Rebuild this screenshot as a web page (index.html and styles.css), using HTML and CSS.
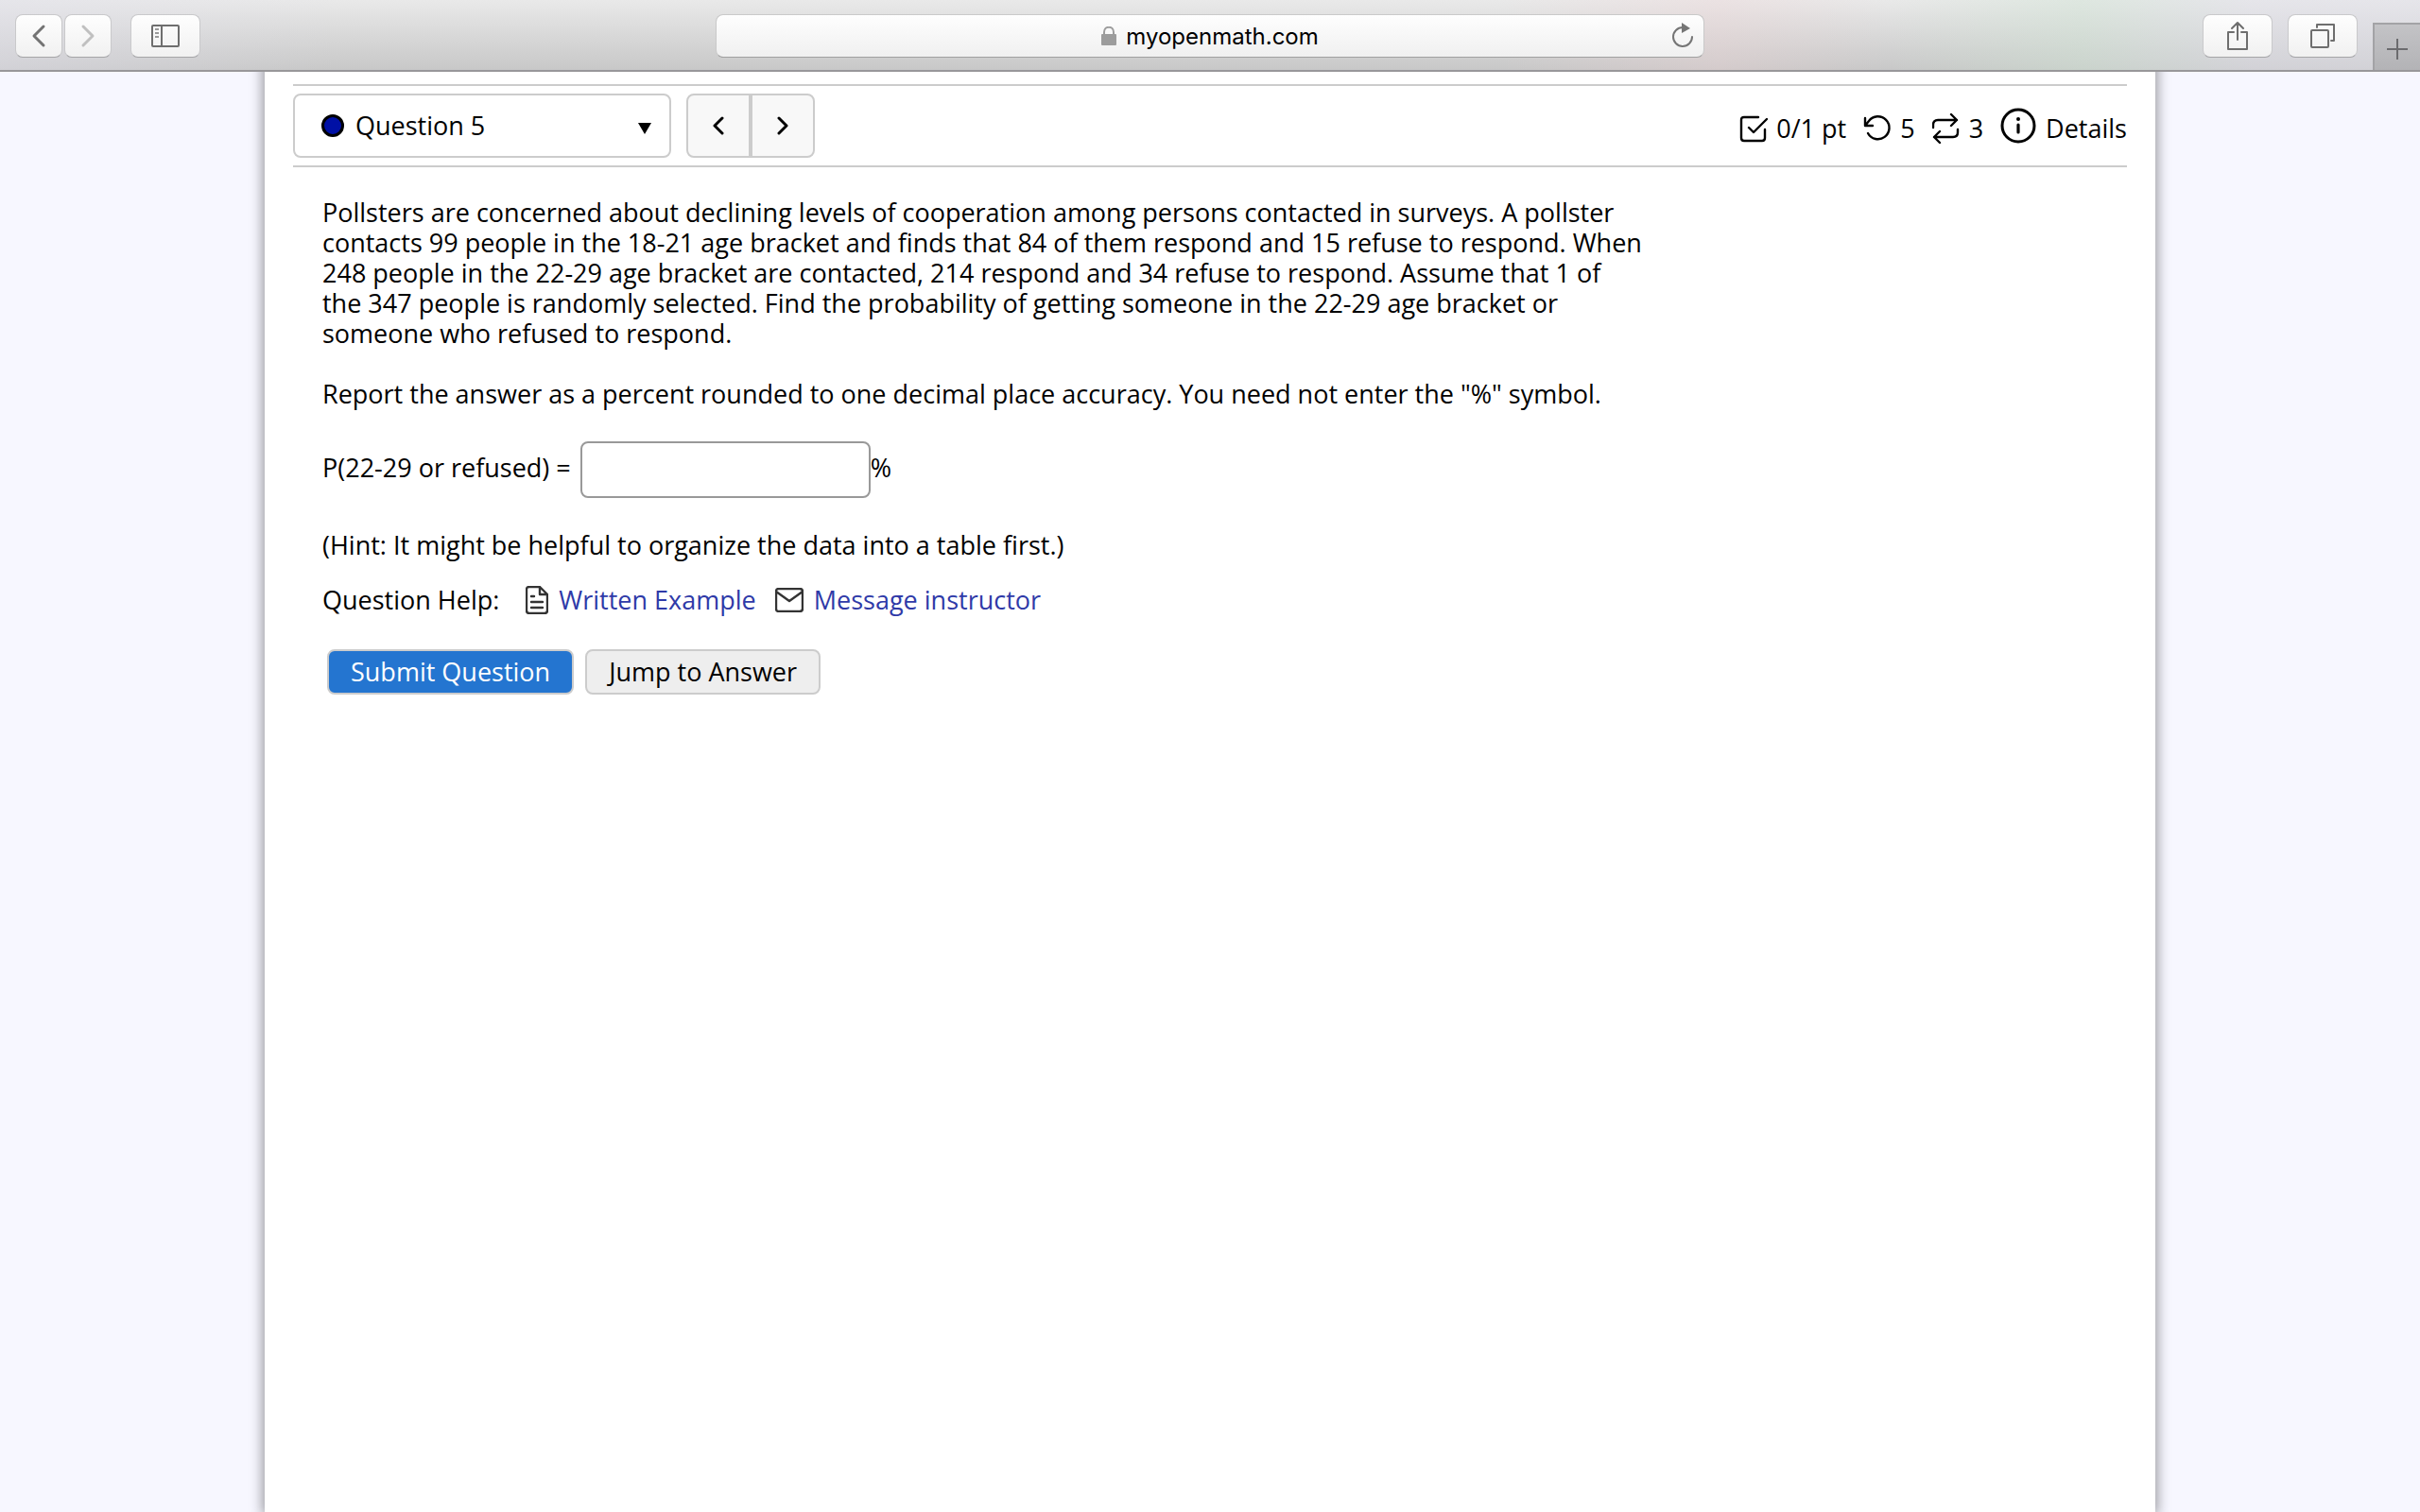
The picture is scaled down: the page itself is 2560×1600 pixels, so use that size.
FILE: index.html
```html
<!DOCTYPE html>
<html lang="en">
<head>
  <meta charset="UTF-8">
  <meta name="viewport" content="width=device-width, initial-scale=1.0">
  <title>MyOpenMath</title>
  <link rel="stylesheet" href="styles.css">
</head>
<body>
  <header class="toolbar">
    <div class="left-group">
      <div class="nav-group">
        <button class="tool-btn small" aria-label="Back">
          <svg width="50" height="44" viewBox="0 0 50 44"><path d="M30 12 L20 22 L30 32" stroke="#737373" stroke-width="3"/></svg>
        </button>
        <button class="tool-btn small" aria-label="Forward">
          <svg width="50" height="44" viewBox="0 0 50 44"><path d="M20 12 L30 22 L20 32" stroke="#c0c0c0" stroke-width="3"/></svg>
        </button>
      </div>
      <button class="tool-btn" aria-label="Show sidebar">
        <svg width="30" height="24" viewBox="0 0 30 24">
          <rect x="1" y="1" width="28" height="22" rx="1" stroke="#6e6e6e" stroke-width="2"/>
          <path d="M11 1 V23" stroke="#6e6e6e" stroke-width="2"/>
          <path d="M4 5 H8 M4 9 H8 M4 13 H8" stroke="#9a9a9a" stroke-width="2" stroke-linecap="butt"/>
        </svg>
      </button>
    </div>
    <div class="address">
      <svg width="16" height="20" viewBox="0 0 16 20">
        <rect x="0" y="8" width="16" height="12" rx="1" fill="#9c9c9c"/>
        <path d="M3 9 V6 C3 -1 13 -1 13 6 V9" stroke="#9c9c9c" stroke-width="2"/>
      </svg>
      <input class="url" type="text" value="myopenmath.com" aria-label="Address">
      <button class="reload" aria-label="Reload">
        <svg width="24" height="28" viewBox="0 0 24 28">
          <path d="M12 5 A10 10 0 1 0 22 15" stroke="#757575" stroke-width="2"/>
          <path d="M11 0 L20 6 L11 11 Z" fill="#757575"/>
        </svg>
      </button>
    </div>
    <div class="right-group">
      <button class="tool-btn" aria-label="Share">
        <svg width="24" height="32" viewBox="0 0 24 32">
          <path d="M8 12 H2 V30 H22 V12 H16 M12 20 V2 M6 8 L12 2 L18 8" stroke="#6e6e6e" stroke-width="2"/>
        </svg>
      </button>
      <button class="tool-btn" aria-label="Show all tabs">
        <svg width="26" height="26" viewBox="0 0 26 26">
          <rect x="1" y="7" width="18" height="18" rx="1" stroke="#6e6e6e" stroke-width="2"/>
          <path d="M7 4 V1 H25 V18 H22" stroke="#6e6e6e" stroke-width="2"/>
        </svg>
      </button>
      <button class="new-tab" aria-label="New tab">
        <svg width="22" height="22" viewBox="0 0 22 22"><path d="M11 0 V22 M0 11 H22" stroke="#6b6b6e" stroke-width="2"/></svg>
      </button>
    </div>
  </header>

  <main class="page">
    <div class="question-bar">
      <div class="picker">
        <span class="status-dot"></span>
        <select class="question-select" aria-label="Question">
          <option>Question 5</option>
        </select>
        <svg class="caret" width="14" height="12" viewBox="0 0 14 12"><path d="M0 0 H14 L7 12 Z" fill="#000"/></svg>
      </div>
      <div class="pager">
        <button aria-label="Previous question">
          <svg width="12" height="20" viewBox="0 0 12 20"><path d="M10 2 L2 10 L10 18" stroke="#000" stroke-width="3"/></svg>
        </button>
        <button aria-label="Next question">
          <svg width="12" height="20" viewBox="0 0 12 20"><path d="M2 2 L10 10 L2 18" stroke="#000" stroke-width="3"/></svg>
        </button>
      </div>
      <div class="info">
        <span class="stat">
          <svg width="30" height="30" viewBox="0 0 30 30"><path d="M20 3 H5 Q2 3 2 6 V25 Q2 28 5 28 H24 Q27 28 27 25 V16 M10 14 L15 19 L29 5" stroke="#000" stroke-width="2.4"/></svg>
          0/1 pt
        </span>
        <span class="stat">
          <svg width="30" height="30" viewBox="0 0 30 30"><path d="M2 4 V12 H10 M2 12 L6 7 A12 12 0 1 1 5 20" stroke="#000" stroke-width="2.4"/></svg>
          5
        </span>
        <span class="stat">
          <svg width="30" height="32" viewBox="0 0 30 32"><path d="M1 15 V12 Q1 7 6 7 H26 M20 1 L26 7 L20 13 M27 17 V20 Q27 25 22 25 H2 M8 19 L2 25 L8 31" stroke="#000" stroke-width="2.4"/></svg>
          3
        </span>
        <button class="details">
          <svg width="38" height="38" viewBox="0 0 38 38">
            <circle cx="19" cy="19" r="17" stroke="#000" stroke-width="3"/>
            <path d="M19 18 V26" stroke="#000" stroke-width="3.2"/>
            <circle cx="19" cy="12" r="2" fill="#000"/>
          </svg>
          <span>Details</span>
        </button>
      </div>
    </div>

    <div class="question">
      <p>Pollsters are concerned about declining levels of cooperation among persons contacted in surveys. A pollster<br>
      contacts 99 people in the 18-21 age bracket and finds that 84 of them respond and 15 refuse to respond. When<br>
      248 people in the 22-29 age bracket are contacted, 214 respond and 34 refuse to respond. Assume that 1 of<br>
      the 347 people is randomly selected. Find the probability of getting someone in the 22-29 age bracket or<br>
      someone who refused to respond.</p>
      <p>Report the answer as a percent rounded to one decimal place accuracy. You need not enter the "%" symbol.</p>
      <div class="answer">
        <label for="qn0">P(22-29 or refused) =</label>
        <input type="text" id="qn0" autocomplete="off">
        <span>%</span>
      </div>
      <p>(Hint: It might be helpful to organize the data into a table first.)</p>
      <div class="help">
        <span>Question Help:</span>
        <a href="#">
          <svg width="24" height="30" viewBox="0 0 24 30"><path d="M15 1 H4 Q1 1 1 4 V26 Q1 29 4 29 H20 Q23 29 23 26 V9 Z M15 1 V9 H23 M6 11 H9 M6 17 H18 M6 23 H18" stroke="#333" stroke-width="2.4"/></svg>
          Written Example
        </a>
        <a href="#">
          <svg width="30" height="26" viewBox="0 0 30 26"><path d="M4 1 H26 Q29 1 29 4 V22 Q29 25 26 25 H4 Q1 25 1 22 V4 Q1 1 4 1 Z M1 4 L15 14 L29 4" stroke="#333" stroke-width="2.4"/></svg>
          Message instructor
        </a>
      </div>
      <div class="actions">
        <button class="btn primary">Submit Question</button>
        <button class="btn">Jump to Answer</button>
      </div>
    </div>
  </main>
</body>
</html>
```
FILE: styles.css
```css
* {
  box-sizing: border-box;
}
body {
  margin: 0;
  min-height: 100vh;
  display: flex;
  flex-direction: column;
  background: #f7f7ff;
  color: #000;
  font-family: "Open Sans", sans-serif;
  font-size: 27px;
  line-height: 32px;
}
svg {
  display: block;
  flex: none;
  fill: none;
  stroke-linecap: round;
  stroke-linejoin: round;
}
button, input, select {
  font: inherit;
  color: inherit;
}
button {
  display: flex;
  align-items: center;
  justify-content: center;
  padding: 0;
  cursor: pointer;
}

/* browser toolbar */
.toolbar {
  position: relative;
  z-index: 1;
  display: grid;
  grid-template-columns: 1fr 1046px 1fr;
  align-items: center;
  height: 76px;
  border-bottom: 2px solid #98979a;
  background:
    linear-gradient(90deg, rgba(225, 224, 236, 0.4) 0, rgba(225, 224, 236, 0) 14%, transparent 62%, rgba(240, 210, 212, 0.3) 71%, transparent 78%, rgba(205, 228, 210, 0.4) 86%, rgba(225, 224, 236, 0.4) 93%),
    linear-gradient(#e9e9e9, #c8c8c8);
}
.left-group {
  display: flex;
  gap: 20px;
  padding: 2px 0 0 16px;
}
.nav-group {
  display: flex;
  gap: 2px;
}
.tool-btn {
  width: 74px;
  height: 46px;
  border: 1px solid #c9c9cb;
  border-bottom-color: #a5a5a7;
  border-radius: 8px;
  background: linear-gradient(#fefefe, #f1f1f1);
}
.tool-btn.small {
  width: 50px;
}
.address {
  position: relative;
  display: flex;
  align-items: center;
  justify-content: center;
  gap: 10px;
  height: 46px;
  margin-top: 2px;
  border: 1px solid #c9c9c9;
  border-bottom-color: #a0a0a0;
  border-radius: 8px;
  background: linear-gradient(#fefefe, #f0f0f0);
}
.url {
  field-sizing: content;
  padding: 2px 0 0;
  border: 0;
  background: none;
  font-family: Inter, sans-serif;
  font-size: 24px;
}
.reload {
  position: absolute;
  right: 10px;
  border: 0;
  background: none;
}
.right-group {
  display: flex;
  align-items: center;
  justify-content: flex-end;
  gap: 16px;
  height: 74px;
  padding-top: 2px;
}
.new-tab {
  align-self: flex-end;
  width: 50px;
  height: 50px;
  padding-top: 3px;
  border: 0;
  border-top: 2px solid #a3a3a6;
  border-left: 2px solid #a3a3a6;
  background: linear-gradient(#c3c3c6, #b3b3b6);
}

/* page column, its top edge tucked under the toolbar */
.page {
  flex: 1;
  margin: -20px 280px 0;
  padding: 33px 30px 0;
  background: #fff;
  box-shadow: 0 0 12px 3px #a0a0a6;
  clip-path: inset(0 -20px 0 -20px);
}
.question-bar {
  display: flex;
  align-items: center;
  height: 88px;
  border-top: 2px solid #ccc;
  border-bottom: 2px solid #ccc;
}
.picker {
  position: relative;
  width: 400px;
}
.question-select {
  display: block;
  width: 100%;
  height: 68px;
  padding: 0 64px;
  border: 2px solid #ccc;
  border-radius: 8px;
  background: #fff;
  appearance: none;
}
.status-dot {
  position: absolute;
  top: 22px;
  left: 30px;
  width: 24px;
  height: 24px;
  border: 3px solid #000;
  border-radius: 50%;
  background: #0010a5;
}
.caret {
  position: absolute;
  top: 31px;
  right: 21px;
  pointer-events: none;
}
.pager {
  display: flex;
  margin-left: 16px;
}
.pager button {
  width: 68px;
  height: 68px;
  border: 2px solid #ccc;
  border-radius: 8px 0 0 8px;
  background: #f8f8f8;
}
.pager button + button {
  border-radius: 0 8px 8px 0;
}
.info {
  display: flex;
  align-items: center;
  gap: 18px;
  margin-left: auto;
}
.stat {
  display: flex;
  align-items: center;
  gap: 9px;
  padding-top: 6px;
}
.details {
  gap: 10px;
  border: 0;
  background: none;
}
.details span {
  padding-top: 6px;
}

/* question body */
.question {
  padding: 32px 31px;
}
.question p {
  margin: 0 0 32px;
}
.answer {
  display: flex;
  align-items: center;
  margin: 34px 0;
}
.answer label,
.answer span {
  padding-bottom: 4px;
}
.answer input {
  width: 307px;
  height: 60px;
  margin-left: 10px;
  padding: 0 12px;
  border: 2px solid #999;
  border-radius: 8px;
  background: #fff;
}
.help {
  display: flex;
  gap: 20px;
  margin-top: -6px;
}
.help span {
  margin-right: 8px;
}
.help a {
  display: flex;
  align-items: center;
  gap: 11px;
  color: #2f3aa8;
  text-decoration: none;
}
.actions {
  display: flex;
  gap: 12px;
  margin: 36px 0 0 5px;
}
.btn {
  height: 48px;
  padding: 0 23px;
  border: 2px solid #ccc;
  border-radius: 8px;
  background: #eee;
}
.btn.primary {
  background: #2475d0;
  color: #fff;
}
```
